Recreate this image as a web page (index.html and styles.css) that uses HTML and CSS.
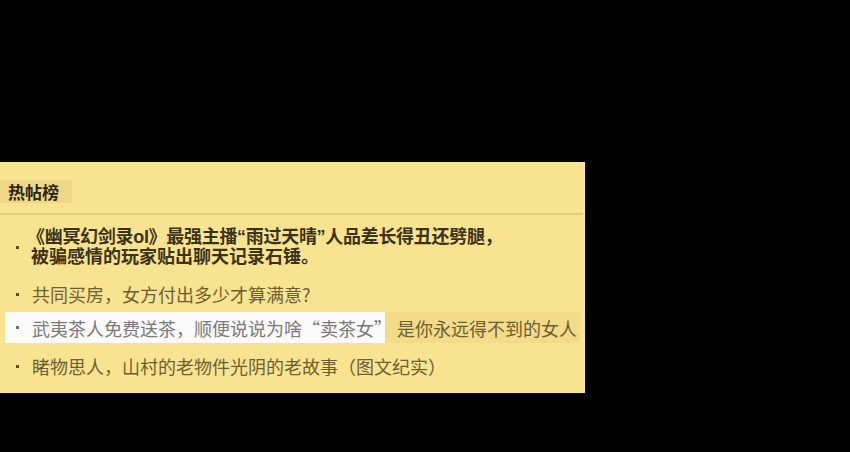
FILE: index.html
```html
<!DOCTYPE html>
<html lang="zh-CN">
<head>
<meta charset="utf-8">
<link rel="stylesheet" href="styles.css">
</head>
<body>
<div class="panel">
  <div class="head"><span class="title">热帖榜</span></div>
  <div class="sep"></div>
  <ul class="list">
    <li class="item hot"><span class="dot"></span><span class="txt"><span class="l1">《幽冥幻剑录ol》最强主播“雨过天晴”人品差长得丑还劈腿，</span><br>被骗感情的玩家贴出聊天记录石锤。</span></li>
    <li class="item i2"><span class="dot"></span><span class="txt">共同买房，女方付出多少才算满意?</span></li>
    <li class="item i3"><span class="sel"><span class="dot"></span><span class="txt">武夷茶人免费送茶，顺便说说为啥“卖茶女”</span></span><span class="rest">是你永远得不到的女人</span></li>
    <li class="item i4"><span class="dot"></span><span class="txt">睹物思人，山村的老物件光阴的老故事（图文纪实）</span></li>
  </ul>
</div>
</body>
</html>
```
FILE: styles.css
```css
html, body { margin: 0; padding: 0; background: #000; }
body { width: 850px; height: 452px; overflow: hidden; font-family: "Noto Sans CJK SC", "Noto Sans", sans-serif; }
.panel {
  margin-top: 162px;
  width: 585px;
  height: 231px;
  background: #f8e391;
  border-right: 2px solid #f4e6a6;
  padding-top: 18px;
  box-sizing: border-box;
}
.head { height: 23px; display: flex; }
.title {
  display: flex; align-items: center;
  width: 72px; box-sizing: border-box; padding-left: 8px;
  background: #eed888;
  font-weight: 700; font-size: 17px; color: #2a2411;
}
.sep { margin-top: 10px; width: 583px; height: 2px; background: #e2cb79; }
.list { list-style: none; margin: 0; padding: 0; }
.item { display: flex; align-items: center; font-size: 18px; line-height: 20px; color: #6e5f31; }
.dot { width: 3px; height: 3px; background: #5c4f28; margin-left: 16px; margin-right: 13px; flex: none; }
.hot { margin-top: 13px; color: #3b3218; font-weight: 700; font-size: 18px; line-height: 19.5px; font-family: "Liberation Sans", "Noto Sans CJK SC", sans-serif; }
.hot .txt { margin-left: -1px; }
.hot .l1 { margin-left: -4px; letter-spacing: -0.3px; }
.i2 { margin-top: 17px; }
.i3 { margin-top: 8px; margin-left: 5px; width: 575px; height: 31px; background: #f2dc89; }
.i3 .sel { display: flex; align-items: center; height: 31px; width: 380px; background: #fbfbfb; color: #7a7a78; }
.i3 .dot { margin-left: 11px; background: #707070; }
.i3 .rest { margin-left: 12px; }
.i4 { margin-top: 13px; }
```
